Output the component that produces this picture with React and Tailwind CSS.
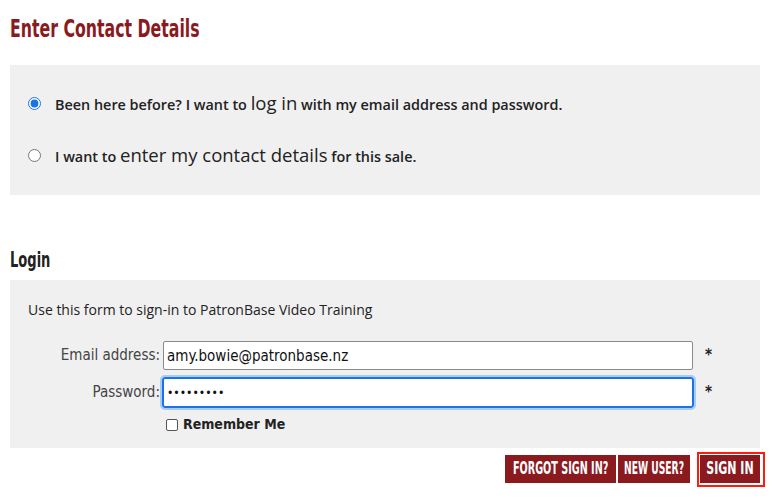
import { useState } from "react";

const cond = { fontFamily: '"Liberation Sans Narrow", "DejaVu Sans Condensed", "Liberation Sans", sans-serif' };

export default function App() {
  const [mode, setMode] = useState("login");
  const [email, setEmail] = useState("amy.bowie@patronbase.nz");
  const [pw, setPw] = useState("123456789");

  return (
    <div className="w-[777px] h-[501px] bg-white overflow-hidden" style={{ fontFamily: '"Open Sans", sans-serif' }}>
      <div className="pl-[10px] pr-[17px]">
        <h1 className="pt-[14px] h-[65px] text-[25px] font-bold text-[#8b1a1f] leading-[30px] whitespace-nowrap" style={cond}>
          <span className="inline-block scale-x-[0.7] origin-left">Enter Contact Details</span>
        </h1>

        {/* Auswahl */}
        <div className="bg-[#f0f0f0] h-[130px] pl-[18px] pt-[26px] flex flex-col gap-[28px]">
          <label className="flex items-center gap-[14px] text-[14.4px] font-semibold text-[#222] h-[24px] whitespace-nowrap">
            <input type="radio" checked={mode === "login"} onChange={() => setMode("login")} className="w-[13px] h-[13px] accent-[#1a73e8] m-0" />
            <span>
              Been here before? I want to <span className="text-[18.5px] font-normal">log in</span> with my email address and password.
            </span>
          </label>
          <label className="flex items-center gap-[14px] text-[14.4px] font-semibold text-[#222] h-[24px] whitespace-nowrap">
            <input type="radio" checked={mode === "contact"} onChange={() => setMode("contact")} className="w-[13px] h-[13px] m-0" />
            <span>
              I want to <span className="text-[18.5px] font-normal">enter my contact details</span> for this sale.
            </span>
          </label>
        </div>

        <h2 className="mt-[50px] h-[35px] text-[22px] font-bold text-[#222] leading-[30px]" style={cond}>
          <span className="inline-block scale-x-[0.66] origin-left">Login</span>
        </h2>

        {/* Formular */}
        <div className="bg-[#f0f0f0] h-[168px] pl-[18px] pt-[19px]">
          <p className="text-[14px] text-[#222] leading-[22px]">Use this form to sign-in to PatronBase Video Training</p>
          <div className="mt-[20px] grid grid-cols-[132px_530px_auto] items-center gap-x-[3px] gap-y-[7px] text-[15px] text-[#444]" style={cond}>
            <span className="text-right">Email address:</span>
            <input
              value={email}
              onChange={(e) => setEmail(e.target.value)}
              className="h-[29px] w-[530px] border border-[#8a8a8a] rounded-[2px] bg-white px-[3px] text-[15px] text-[#111] outline-none"
              style={cond}
            />
            <span className="pl-[9px] text-[#222] font-bold">*</span>
            <span className="text-right">Password:</span>
            <input
              type="password"
              value={pw}
              onChange={(e) => setPw(e.target.value)}
              className="h-[31px] w-[532px] -ml-[1px] border-2 border-[#1a73e8] rounded-[3px] bg-white px-[3px] text-[12px] text-[#111] outline outline-2 outline-[#a8cdf5]"
            />
            <span className="pl-[9px] text-[#222] font-bold">*</span>
            <span />
            <label className="flex items-center gap-[5px] -mt-[1px] font-bold text-[14px] text-[#222] pl-[3px]">
              <span className="w-[12px] h-[12px] border border-[#555] rounded-[2px] bg-white" />
              Remember Me
            </label>
          </div>
        </div>

        {/* Knöpfe */}
        <div className="flex justify-end items-start mt-[4px] -mr-[5px]" style={cond}>
          <button className="mt-[3px] h-[28px] w-[111px] flex items-center justify-center bg-[#8b1a1f] text-white text-[17px] font-bold whitespace-nowrap">
            <span className="shrink-0 inline-block scale-x-[0.63]">FORGOT SIGN IN?</span>
          </button>
          <button className="mt-[3px] ml-[2px] h-[28px] w-[72px] flex items-center justify-center bg-[#8b1a1f] text-white text-[17px] font-bold whitespace-nowrap">
            <span className="shrink-0 inline-block scale-x-[0.6]">NEW USER?</span>
          </button>
          <div className="ml-[7px] w-[68px] h-[35px] border-2 border-[#ff1a0a] pl-[1px] pt-[1px]">
            <button className="h-[28px] w-[60px] flex items-center justify-center bg-[#8b1a1f] text-white text-[17px] font-bold whitespace-nowrap">
              <span className="shrink-0 inline-block scale-x-[0.72]">SIGN IN</span>
            </button>
          </div>
        </div>
      </div>
    </div>
  );
}
